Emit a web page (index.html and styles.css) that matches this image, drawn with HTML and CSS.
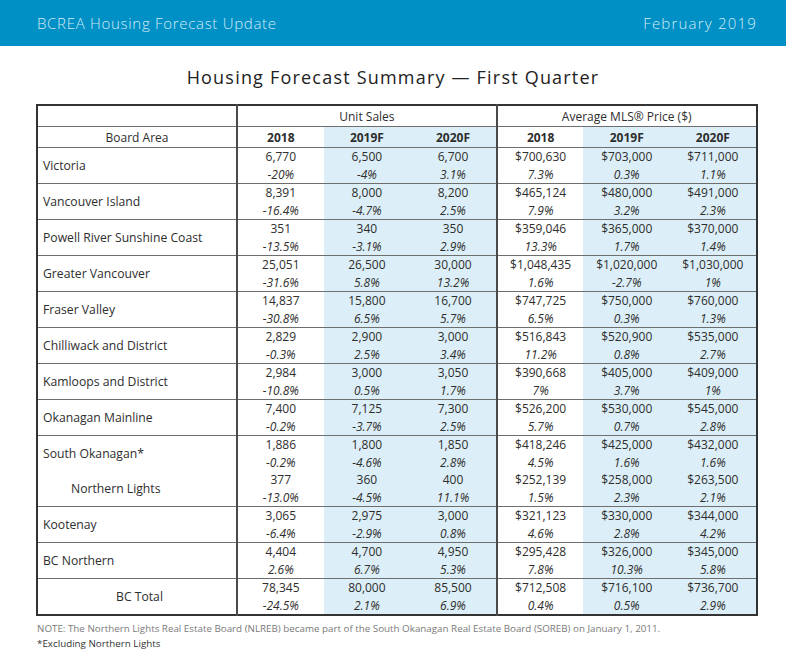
FILE: index.html
```html
<!DOCTYPE html>
<html>
<head>
<meta charset="utf-8">
<link rel="stylesheet" href="styles.css">
</head>
<body>
<header class="topbar">
  <span class="brand">BCREA Housing Forecast Update</span>
  <span class="date">February 2019</span>
</header>
<h1 class="title">Housing Forecast Summary — First Quarter</h1>
<table class="fc">
  <colgroup>
    <col class="c-area"><col class="c-n"><col class="c-n"><col class="c-n"><col class="c-n"><col class="c-n"><col class="c-n">
  </colgroup>
  <thead>
    <tr class="h1">
      <th class="vsep"></th>
      <th colspan="3" class="grp vsep">Unit Sales</th>
      <th colspan="3" class="grp">Average MLS® Price ($)</th>
    </tr>
    <tr class="h2">
      <th class="area-h vsep">Board Area</th>
      <th>2018</th><th class="sh">2019F</th><th class="sh vsep">2020F</th>
      <th>2018</th><th class="sh">2019F</th><th class="sh">2020F</th>
    </tr>
  </thead>
  <tbody>
    <tr>
      <td class="area vsep">Victoria</td>
      <td><div>6,770</div><i>-20%</i></td>
      <td class="sh"><div>6,500</div><i>-4%</i></td>
      <td class="sh vsep"><div>6,700</div><i>3.1%</i></td>
      <td><div>$700,630</div><i>7.3%</i></td>
      <td class="sh"><div>$703,000</div><i>0.3%</i></td>
      <td class="sh"><div>$711,000</div><i>1.1%</i></td>
    </tr>
    <tr>
      <td class="area vsep">Vancouver Island</td>
      <td><div>8,391</div><i>-16.4%</i></td>
      <td class="sh"><div>8,000</div><i>-4.7%</i></td>
      <td class="sh vsep"><div>8,200</div><i>2.5%</i></td>
      <td><div>$465,124</div><i>7.9%</i></td>
      <td class="sh"><div>$480,000</div><i>3.2%</i></td>
      <td class="sh"><div>$491,000</div><i>2.3%</i></td>
    </tr>
    <tr>
      <td class="area vsep">Powell River Sunshine Coast</td>
      <td><div>351</div><i>-13.5%</i></td>
      <td class="sh"><div>340</div><i>-3.1%</i></td>
      <td class="sh vsep"><div>350</div><i>2.9%</i></td>
      <td><div>$359,046</div><i>13.3%</i></td>
      <td class="sh"><div>$365,000</div><i>1.7%</i></td>
      <td class="sh"><div>$370,000</div><i>1.4%</i></td>
    </tr>
    <tr>
      <td class="area vsep">Greater Vancouver</td>
      <td><div>25,051</div><i>-31.6%</i></td>
      <td class="sh"><div>26,500</div><i>5.8%</i></td>
      <td class="sh vsep"><div>30,000</div><i>13.2%</i></td>
      <td><div>$1,048,435</div><i>1.6%</i></td>
      <td class="sh"><div>$1,020,000</div><i>-2.7%</i></td>
      <td class="sh"><div>$1,030,000</div><i>1%</i></td>
    </tr>
    <tr>
      <td class="area vsep">Fraser Valley</td>
      <td><div>14,837</div><i>-30.8%</i></td>
      <td class="sh"><div>15,800</div><i>6.5%</i></td>
      <td class="sh vsep"><div>16,700</div><i>5.7%</i></td>
      <td><div>$747,725</div><i>6.5%</i></td>
      <td class="sh"><div>$750,000</div><i>0.3%</i></td>
      <td class="sh"><div>$760,000</div><i>1.3%</i></td>
    </tr>
    <tr>
      <td class="area vsep">Chilliwack and District</td>
      <td><div>2,829</div><i>-0.3%</i></td>
      <td class="sh"><div>2,900</div><i>2.5%</i></td>
      <td class="sh vsep"><div>3,000</div><i>3.4%</i></td>
      <td><div>$516,843</div><i>11.2%</i></td>
      <td class="sh"><div>$520,900</div><i>0.8%</i></td>
      <td class="sh"><div>$535,000</div><i>2.7%</i></td>
    </tr>
    <tr>
      <td class="area vsep">Kamloops and District</td>
      <td><div>2,984</div><i>-10.8%</i></td>
      <td class="sh"><div>3,000</div><i>0.5%</i></td>
      <td class="sh vsep"><div>3,050</div><i>1.7%</i></td>
      <td><div>$390,668</div><i>7%</i></td>
      <td class="sh"><div>$405,000</div><i>3.7%</i></td>
      <td class="sh"><div>$409,000</div><i>1%</i></td>
    </tr>
    <tr>
      <td class="area vsep">Okanagan Mainline</td>
      <td><div>7,400</div><i>-0.2%</i></td>
      <td class="sh"><div>7,125</div><i>-3.7%</i></td>
      <td class="sh vsep"><div>7,300</div><i>2.5%</i></td>
      <td><div>$526,200</div><i>5.7%</i></td>
      <td class="sh"><div>$530,000</div><i>0.7%</i></td>
      <td class="sh"><div>$545,000</div><i>2.8%</i></td>
    </tr>
    <tr class="nobot">
      <td class="area vsep">South Okanagan*</td>
      <td><div>1,886</div><i>-0.2%</i></td>
      <td class="sh"><div>1,800</div><i>-4.6%</i></td>
      <td class="sh vsep"><div>1,850</div><i>2.8%</i></td>
      <td><div>$418,246</div><i>4.5%</i></td>
      <td class="sh"><div>$425,000</div><i>1.6%</i></td>
      <td class="sh"><div>$432,000</div><i>1.6%</i></td>
    </tr>
    <tr>
      <td class="area sub vsep">Northern Lights</td>
      <td><div>377</div><i>-13.0%</i></td>
      <td class="sh"><div>360</div><i>-4.5%</i></td>
      <td class="sh vsep"><div>400</div><i>11.1%</i></td>
      <td><div>$252,139</div><i>1.5%</i></td>
      <td class="sh"><div>$258,000</div><i>2.3%</i></td>
      <td class="sh"><div>$263,500</div><i>2.1%</i></td>
    </tr>
    <tr>
      <td class="area vsep">Kootenay</td>
      <td><div>3,065</div><i>-6.4%</i></td>
      <td class="sh"><div>2,975</div><i>-2.9%</i></td>
      <td class="sh vsep"><div>3,000</div><i>0.8%</i></td>
      <td><div>$321,123</div><i>4.6%</i></td>
      <td class="sh"><div>$330,000</div><i>2.8%</i></td>
      <td class="sh"><div>$344,000</div><i>4.2%</i></td>
    </tr>
    <tr>
      <td class="area vsep">BC Northern</td>
      <td><div>4,404</div><i>2.6%</i></td>
      <td class="sh"><div>4,700</div><i>6.7%</i></td>
      <td class="sh vsep"><div>4,950</div><i>5.3%</i></td>
      <td><div>$295,428</div><i>7.8%</i></td>
      <td class="sh"><div>$326,000</div><i>10.3%</i></td>
      <td class="sh"><div>$345,000</div><i>5.8%</i></td>
    </tr>
    <tr>
      <td class="area total vsep">BC Total</td>
      <td><div>78,345</div><i>-24.5%</i></td>
      <td class="sh"><div>80,000</div><i>2.1%</i></td>
      <td class="sh vsep"><div>85,500</div><i>6.9%</i></td>
      <td><div>$712,508</div><i>0.4%</i></td>
      <td class="sh"><div>$716,100</div><i>0.5%</i></td>
      <td class="sh"><div>$736,700</div><i>2.9%</i></td>
    </tr>
  </tbody>
</table>
<p class="note">NOTE: The Northern Lights Real Estate Board (NLREB) became part of the South Okanagan Real Estate Board (SOREB) on January 1, 2011.</p>
<p class="excl">*Excluding Northern Lights</p>
</body>
</html>
```

FILE: styles.css
```css
html, body {
  margin: 0;
  padding: 0;
  background: #ffffff;
}
body {
  font-family: "Open Sans", "DejaVu Sans", sans-serif;
  color: #2b2b2b;
}
.topbar {
  height: 46px;
  background: #0090c5;
  display: flex;
  align-items: center;
  justify-content: space-between;
  padding: 0 29px 0 37px;
  color: #d3ebf6;
  font-family: "Open Sans", sans-serif;
  font-weight: 300;
  font-size: 15px;
  letter-spacing: 0.7px;
}
.topbar .date {
  letter-spacing: 1.2px;
}
.title {
  margin: 0;
  padding: 18px 0 14px;
  text-align: center;
  font-family: "Open Sans", sans-serif;
  font-weight: 400;
  font-size: 18px;
  letter-spacing: 1.2px;
  line-height: 26px;
  color: #222;
}
.fc {
  margin-left: 36px;
  width: 720px;
  border-collapse: collapse;
  table-layout: fixed;
  border: 2px solid #333;
  font-size: 12px;
  color: #2e2e2e;
}
.c-area { width: 200px; }
.c-n { width: 86.6px; }
.fc th, .fc td {
  padding: 0;
  text-align: center;
  border-top: 1.5px solid #6e6e6e;
  border-bottom: 1.5px solid #6e6e6e;
}
.fc th.vsep, .fc td.vsep {
  border-right: 2px solid #4a4a4a;
}
.fc thead th {
  height: 20px;
  line-height: 19px;
}
.fc .grp {
  font-weight: 400;
}
.fc .h2 th {
  font-weight: 700;
}
.fc .h2 th.area-h {
  font-weight: 400;
}
.fc .sh {
  background: #dceef7;
}
.fc tbody td {
  height: 35px;
  line-height: 17.5px;
  vertical-align: middle;
}
.fc tbody td div, .fc tbody td i {
  display: block;
}
.fc tbody td i {
  font-style: italic;
}
.fc td.area {
  text-align: left;
  padding-left: 5px;
  font-size: 12.2px;
}
.fc td.area.sub {
  padding-left: 33px;
}
.fc td.area.total {
  text-align: center;
}
.fc tr.nobot td {
  border-bottom: none;
}
.fc tr.nobot + tr td {
  border-top: none;
}
.note {
  margin: 5px 0 0 37px;
  font-size: 9.8px;
  color: #7a7a7a;
  line-height: 15px;
}
.excl {
  margin: 0 0 0 37px;
  font-size: 9.8px;
  color: #333;
  line-height: 15px;
}
```
